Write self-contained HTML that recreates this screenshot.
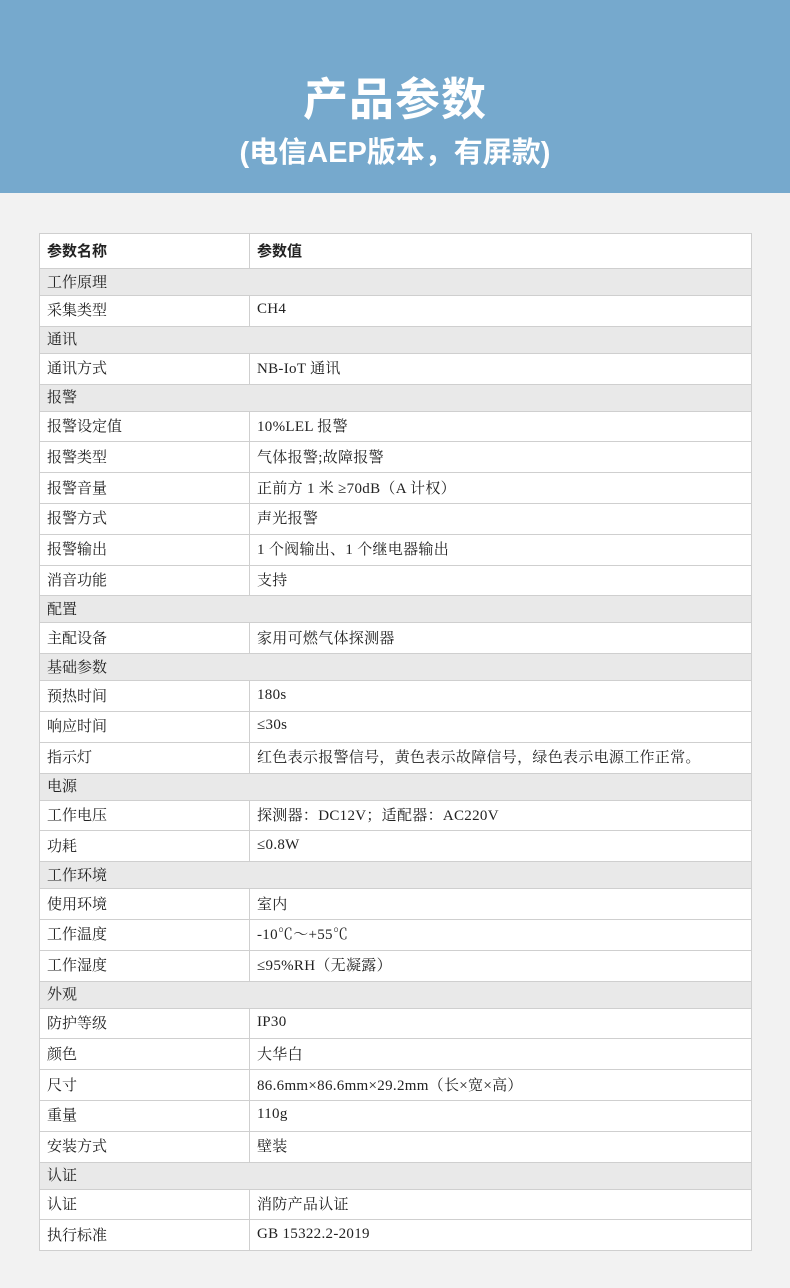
<!DOCTYPE html>
<html><head><meta charset="utf-8"><style>
html,body{margin:0;padding:0;}
body{width:790px;height:1288px;background:#f2f2f2;overflow:hidden;position:relative;font-family:"Liberation Serif","Noto Serif CJK SC",serif;}
.hd{position:absolute;left:0;top:0;width:790px;height:193px;background:#76a9cd;color:#fff;text-align:center;font-family:"Liberation Sans","Noto Sans CJK SC",sans-serif;font-weight:bold;}
.t1{position:absolute;top:72px;width:100%;font-size:45px;line-height:56px;letter-spacing:1px;}
.t2{position:absolute;top:134px;width:100%;font-size:29px;line-height:38px;}
table{position:absolute;left:39px;top:233px;width:713px;border-collapse:collapse;background:#fff;font-size:15px;color:#222;}
td{border:1.5px solid #cfcfcf;padding:0 0 2px 7px;box-sizing:border-box;}
td+td{letter-spacing:0.3px;}
td.a{width:210px;}
tr:not(.s) td{height:30.8px;}
tr.s td{background:#e9e9e9;height:27px;}
tr.h td{height:35px;font-weight:bold;font-family:"Liberation Sans","Noto Sans CJK SC",sans-serif;font-size:15px;letter-spacing:0;}
</style></head><body>
<div class="hd"><div class="t1">产品参数</div><div class="t2">(电信AEP版本，有屏款)</div></div>
<table>
<tr class="h"><td class="a">参数名称</td><td>参数值</td></tr>
<tr class="s"><td colspan="2">工作原理</td></tr>
<tr><td class="a">采集类型</td><td>CH4</td></tr>
<tr class="s"><td colspan="2">通讯</td></tr>
<tr><td class="a">通讯方式</td><td>NB-IoT 通讯</td></tr>
<tr class="s"><td colspan="2">报警</td></tr>
<tr><td class="a">报警设定值</td><td>10%LEL 报警</td></tr>
<tr><td class="a">报警类型</td><td>气体报警;故障报警</td></tr>
<tr><td class="a">报警音量</td><td>正前方 1 米 ≥70dB（A 计权）</td></tr>
<tr><td class="a">报警方式</td><td>声光报警</td></tr>
<tr><td class="a">报警输出</td><td>1 个阀输出、1 个继电器输出</td></tr>
<tr><td class="a">消音功能</td><td>支持</td></tr>
<tr class="s"><td colspan="2">配置</td></tr>
<tr><td class="a">主配设备</td><td>家用可燃气体探测器</td></tr>
<tr class="s"><td colspan="2">基础参数</td></tr>
<tr><td class="a">预热时间</td><td>180s</td></tr>
<tr><td class="a">响应时间</td><td>≤30s</td></tr>
<tr><td class="a">指示灯</td><td>红色表示报警信号，黄色表示故障信号，绿色表示电源工作正常。</td></tr>
<tr class="s"><td colspan="2">电源</td></tr>
<tr><td class="a">工作电压</td><td>探测器：DC12V；适配器：AC220V</td></tr>
<tr><td class="a">功耗</td><td>≤0.8W</td></tr>
<tr class="s"><td colspan="2">工作环境</td></tr>
<tr><td class="a">使用环境</td><td>室内</td></tr>
<tr><td class="a">工作温度</td><td>-10℃～+55℃</td></tr>
<tr><td class="a">工作湿度</td><td>≤95%RH（无凝露）</td></tr>
<tr class="s"><td colspan="2">外观</td></tr>
<tr><td class="a">防护等级</td><td>IP30</td></tr>
<tr><td class="a">颜色</td><td>大华白</td></tr>
<tr><td class="a">尺寸</td><td>86.6mm×86.6mm×29.2mm（长×宽×高）</td></tr>
<tr><td class="a">重量</td><td>110g</td></tr>
<tr><td class="a">安装方式</td><td>壁装</td></tr>
<tr class="s"><td colspan="2">认证</td></tr>
<tr><td class="a">认证</td><td>消防产品认证</td></tr>
<tr><td class="a">执行标准</td><td>GB 15322.2-2019</td></tr>
</table>
</body></html>
